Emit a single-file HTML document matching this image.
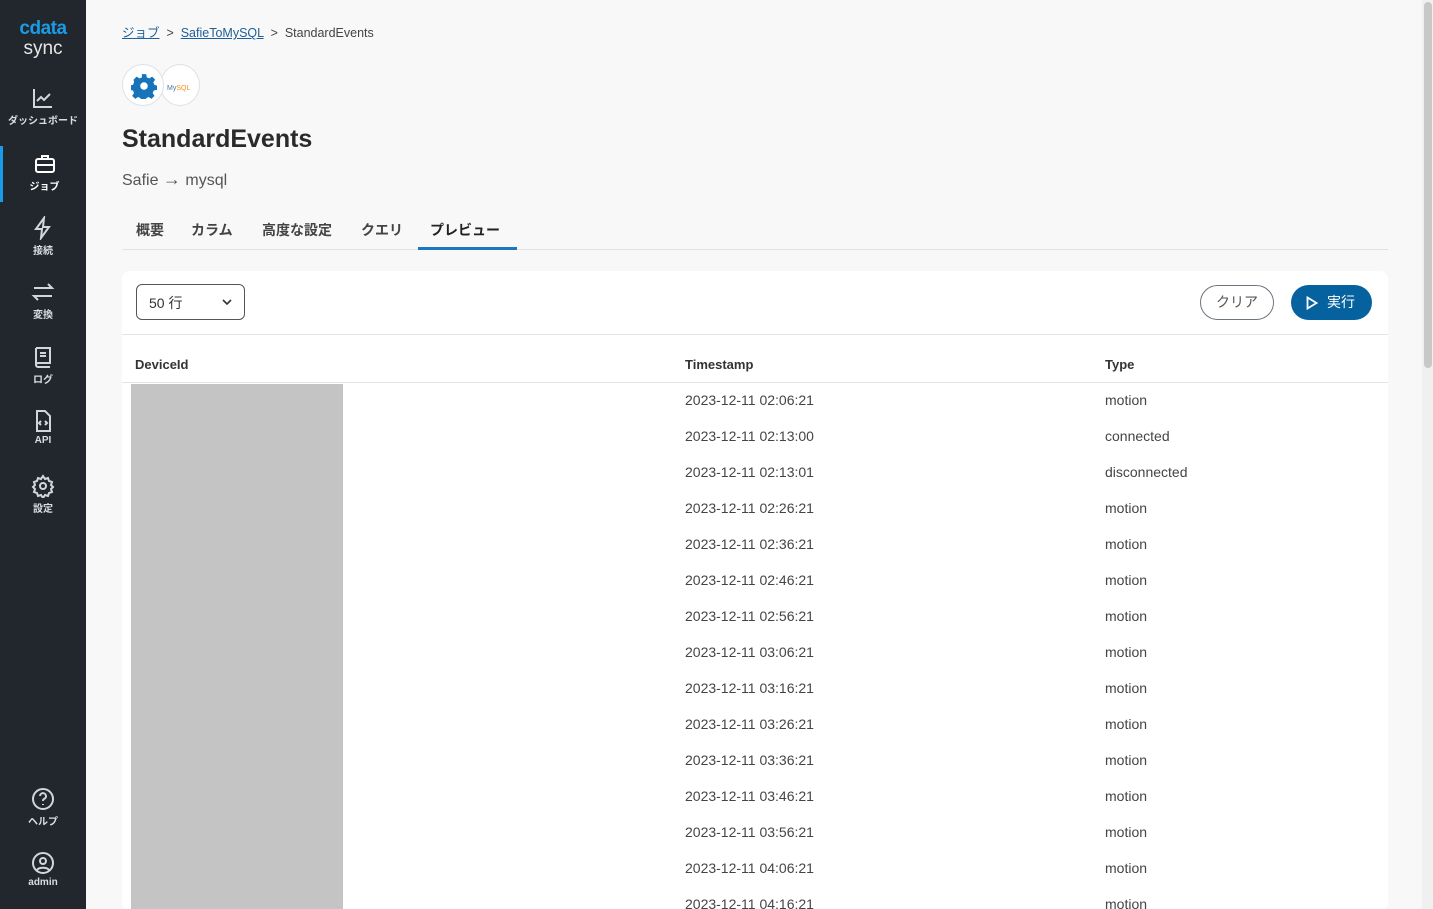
<!DOCTYPE html>
<html><head><meta charset="utf-8"><style>
*{box-sizing:border-box;margin:0;padding:0}
html{width:1433px;height:909px;overflow:hidden}
body{width:1433px;height:909px;overflow:hidden;background:#f8f8f8;font-family:"Liberation Sans","Noto Sans CJK JP",sans-serif;color:#333;position:relative}
.side{position:absolute;left:0;top:0;width:86px;height:909px;background:#21272c}
.logo{position:absolute;top:20px;left:0;width:86px;text-align:center}
.nav{position:absolute;left:0;width:86px;text-align:center;color:#d8dde2;font-size:10px;font-weight:bold}
.nav svg{display:block;margin:0 auto 2px}
.act{border-left:3px solid #1a9be6;color:#fff}
.bc{position:absolute;top:22px;font-size:12.5px;color:#444;white-space:nowrap}
.bc a{color:#1d5f98;text-decoration:underline}
.scroll{position:absolute;right:0;top:0;width:11px;height:909px;background:#f0f0f0}
.thumb{position:absolute;right:1px;top:2px;width:8px;height:366px;background:#c8c8c8;border-radius:4px}
.card{position:absolute;left:122px;top:271px;width:1266px;height:640px;background:#fff;border-radius:8px;overflow:hidden}
.row{position:absolute;font-size:14px;color:#444;white-space:nowrap}
</style></head><body>
<div class="side">
 <div class="logo"><div style="color:#1a9be6;font-weight:bold;font-size:19px;letter-spacing:-0.5px;line-height:18px">cdata</div><div style="color:#e6e6e6;font-size:19px;line-height:22px">sync</div></div>
 <div class="nav" style="top:86px"><svg width="24" height="24" viewBox="0 0 24 24" fill="none" stroke="#cfd6dc" stroke-width="2"><path d="M3 3v18h18M6 15l4-4 3 3 6-6"/></svg>ダッシュボード</div>
 <div class="nav act" style="top:146px;height:56px;padding-top:6px"><svg width="24" height="24" viewBox="0 0 24 24" fill="none" stroke="#fff" stroke-width="2"><rect x="3" y="7" width="18" height="13" rx="2"/><path d="M9 7V4h6v3M3 13h18"/></svg>ジョブ</div>
 <div class="nav" style="top:216px"><svg width="24" height="24" viewBox="0 0 24 24" fill="none" stroke="#cfd6dc" stroke-width="2"><path d="M13 2L5 13h6l-1 9 8-11h-6z"/></svg>接続</div>
 <div class="nav" style="top:280px"><svg width="24" height="24" viewBox="0 0 24 24" fill="none" stroke="#cfd6dc" stroke-width="2"><path d="M3 8h18l-4-4M21 16H3l4 4"/></svg>変換</div>
 <div class="nav" style="top:345px"><svg width="24" height="24" viewBox="0 0 24 24" fill="none" stroke="#cfd6dc" stroke-width="2"><path d="M5 3h14v15H7a2 2 0 0 0 0 4h12M5 3v17M9 8h6M9 11h6"/></svg>ログ</div>
 <div class="nav" style="top:409px"><svg width="24" height="24" viewBox="0 0 24 24" fill="none" stroke="#cfd6dc" stroke-width="2"><path d="M6 2h8l5 5v15H6zM10 12l-2 2 2 2M14 12l2 2-2 2"/></svg>API</div>
 <div class="nav" style="top:474px"><svg width="24" height="24" viewBox="0 0 24 24" fill="none" stroke="#cfd6dc" stroke-width="2"><circle cx="12" cy="12" r="3"/><path d="M12 2l2 3 3-1 1 3 3 1-1 3 2 2-2 2 1 3-3 1-1 3-3-1-2 3-2-3-3 1-1-3-3-1 1-3-2-2 2-2-1-3 3-1 1-3 3 1z"/></svg>設定</div>
 <div class="nav" style="top:787px"><svg width="24" height="24" viewBox="0 0 24 24" fill="none" stroke="#cfd6dc" stroke-width="2"><circle cx="12" cy="12" r="10"/><path d="M9 9a3 3 0 1 1 4 3c-1 .5-1 1-1 2M12 17v1"/></svg>ヘルプ</div>
 <div class="nav" style="top:851px"><svg width="24" height="24" viewBox="0 0 24 24" fill="none" stroke="#cfd6dc" stroke-width="2"><circle cx="12" cy="12" r="10"/><circle cx="12" cy="10" r="3"/><path d="M6 19c2-3 10-3 12 0"/></svg>admin</div>
</div>
<div class="bc" style="left:122px"><a>ジョブ</a> &nbsp;&gt;&nbsp; <a>SafieToMySQL</a> &nbsp;&gt;&nbsp; StandardEvents</div>
<div style="position:absolute;left:160px;top:64px;width:40px;height:42px;border-radius:50%;background:#fff;border:1px solid #dde2e6;font-size:7px;color:#f29111;padding:20px 0 0 6px"><span style="color:#4479a1">My</span>SQL</div>
<div style="position:absolute;left:122px;top:64px;width:42px;height:42px;border-radius:50%;background:#fff;border:1px solid #dde2e6"><svg style="position:absolute;left:8px;top:8px" width="26" height="26" viewBox="0 0 24 24"><path fill="#1774bb" d="M10 1h4l.6 3 2.3 1 2.6-1.7 2.8 2.8L20.6 8.7l1 2.3 2.4.6v4l-3 .6-1 2.3 1.7 2.6-2.8 2.8-2.6-1.7-2.3 1-.6 3h-4l-.6-3-2.3-1-2.6 1.7-2.8-2.8 1.7-2.6-1-2.3-3-.6v-4l3-.6 1-2.3L2.4 6.1l2.8-2.8L7.8 5l2.3-1z"/><circle cx="12" cy="12" r="3.5" fill="#fff"/></svg></div>
<div style="position:absolute;left:122px;top:125px;font-size:25px;font-weight:bold;color:#2a2a2a">StandardEvents</div>
<div style="position:absolute;left:122px;top:169px;font-size:16px;color:#555">Safie <span style="font-size:18px">→</span> mysql</div>
<div style="position:absolute;left:122px;top:249px;width:1266px;height:1px;background:#dfe3e6"></div>
<div style="position:absolute;top:220px;left:136px;font-size:14px;color:#444;white-space:nowrap;font-weight:bold">
<span style="position:absolute;left:0">概要</span><span style="position:absolute;left:55px">カラム</span><span style="position:absolute;left:126px">高度な設定</span><span style="position:absolute;left:225px">クエリ</span><span style="position:absolute;left:294px;color:#222">プレビュー</span></div>
<div style="position:absolute;left:418px;top:247px;width:99px;height:3px;background:#1a78c2"></div>
<div class="card">
 <div style="position:absolute;left:14px;top:13px;width:109px;height:36px;border:1px solid #555;border-radius:6px;font-size:14px;padding:8px 12px;color:#333">50 行<svg style="position:absolute;right:12px;top:14px" width="10" height="7" viewBox="0 0 10 7" fill="none" stroke="#333" stroke-width="1.6"><path d="M1 1l4 4 4-4"/></svg></div>
 <div style="position:absolute;left:1078px;top:14px;width:74px;height:35px;border:1px solid #6c757d;border-radius:18px;font-size:14px;color:#555;text-align:center;line-height:33px">クリア</div>
 <div style="position:absolute;left:1169px;top:14px;width:81px;height:35px;background:#06629f;border-radius:18px;font-size:14px;color:#fff;line-height:35px;padding-left:36px"><svg style="position:absolute;left:15px;top:11px" width="12" height="14" viewBox="0 0 12 14" fill="none" stroke="#fff" stroke-width="1.8"><path d="M1.5 1.5v11l9-5.5z"/></svg>実行</div>
 <div style="position:absolute;left:0;top:63px;width:1266px;height:1px;background:#e2e6ea"></div>
 <div style="position:absolute;left:0;top:111px;width:1266px;height:1px;background:#e2e6ea"></div>
 <div class="row" style="left:13px;top:86px;font-size:13px;font-weight:bold;color:#333">DeviceId</div>
 <div class="row" style="left:563px;top:86px;font-size:13px;font-weight:bold;color:#333">Timestamp</div>
 <div class="row" style="left:983px;top:86px;font-size:13px;font-weight:bold;color:#333">Type</div>
 <div style="position:absolute;left:9px;top:113px;width:212px;height:540px;background:#c4c4c4"></div>
 <div class="row" style="left:563px;top:111px;line-height:36px">2023-12-11 02:06:21<br>2023-12-11 02:13:00<br>2023-12-11 02:13:01<br>2023-12-11 02:26:21<br>2023-12-11 02:36:21<br>2023-12-11 02:46:21<br>2023-12-11 02:56:21<br>2023-12-11 03:06:21<br>2023-12-11 03:16:21<br>2023-12-11 03:26:21<br>2023-12-11 03:36:21<br>2023-12-11 03:46:21<br>2023-12-11 03:56:21<br>2023-12-11 04:06:21<br>2023-12-11 04:16:21</div>
 <div class="row" style="left:983px;top:111px;line-height:36px">motion<br>connected<br>disconnected<br>motion<br>motion<br>motion<br>motion<br>motion<br>motion<br>motion<br>motion<br>motion<br>motion<br>motion<br>motion</div>
</div>
<div class="scroll"><div class="thumb"></div></div>
</body></html>
